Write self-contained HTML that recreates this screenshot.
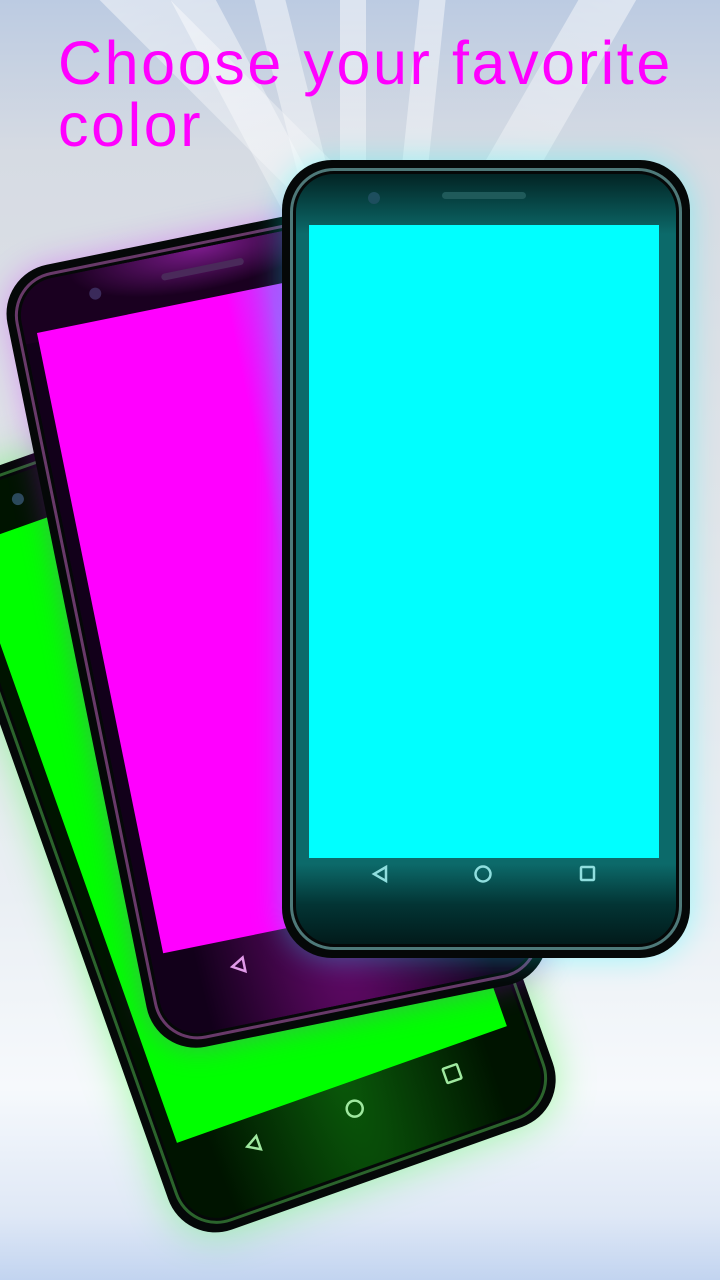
<!DOCTYPE html>
<html><head><meta charset="utf-8"><style>
*{margin:0;padding:0;box-sizing:border-box}
body{width:720px;height:1280px;overflow:hidden;position:relative;font-family:"Liberation Sans",sans-serif;
background:linear-gradient(180deg,#bccbe2 0%,#d6dbe3 12%,#e1e4e9 40%,#eaeff4 70%,#f6f9fc 85%,#dfe8f6 95%,#c2d4f0 100%);}
.ray{position:absolute;top:-100px;width:40px;height:800px;background:linear-gradient(180deg,rgba(255,255,255,.55),rgba(255,255,255,0));transform-origin:top center}
h1{position:absolute;left:58px;top:32px;font-size:61px;line-height:62px;font-weight:normal;color:#ff00ff;letter-spacing:2.6px;z-index:10}
.phone{position:absolute;width:408px;height:798px;border-radius:50px;background:#050808;padding:10px}
.phone .rim{position:absolute;inset:8px;border-radius:44px;border:3px solid rgba(160,160,160,.55)}
.phone .in{position:absolute;inset:14px;border-radius:38px;overflow:hidden}
.scr{position:absolute;left:13px;top:51px;width:350px;height:633px}
.cam{position:absolute;left:72px;top:18px;width:12px;height:12px;border-radius:50%;background:#2a4a5a}
.spk{position:absolute;left:146px;top:18px;width:84px;height:7px;border-radius:4px}
</style></head><body>
<div class="ray" style="left:120px;transform:rotate(-28deg)"></div>
<div class="ray" style="left:340px;width:26px;transform:rotate(0deg)"></div>
<div class="ray" style="left:430px;width:26px;transform:rotate(6deg)"></div>
<div class="ray" style="left:230px;width:30px;transform:rotate(-14deg)"></div>
<div class="ray" style="left:640px;width:50px;transform:rotate(30deg)"></div>
<div class="ray" style="left:10px;width:50px;transform:rotate(-45deg)"></div>
<div style="position:absolute;left:40px;top:620px;width:560px;height:560px;border-radius:50%;background:radial-gradient(circle,rgba(120,255,100,.3),rgba(120,255,100,0) 65%)"></div>

<h1>Choose your favorite<br>color</h1>

<!-- green -->
<div class="phone" style="left:40px;top:403px;transform:rotate(-19.5deg);box-shadow:0 0 40px rgba(0,255,0,.35)">
 <div class="rim" style="border-color:rgba(60,140,60,.7)"></div>
 <div class="in" style="background:radial-gradient(ellipse at 50% 85%,#0a5a0a,#001400 55%)">
  <div class="scr" style="background:#00ff00"></div>
  <div class="cam"></div>
 </div>
 <svg style="position:absolute;left:0;top:0" width="408" height="798"><g fill="none" stroke="#9fe89f" stroke-width="2.5"><path d="M104 718 L92 725 L104 732 Z"/><circle cx="206" cy="725" r="8"/><rect x="302" y="717" width="15" height="15" rx="1"/></g></svg>
</div>

<!-- magenta -->
<div class="phone" style="left:73px;top:226px;transform:rotate(-11.5deg);box-shadow:0 0 30px rgba(200,0,255,.3)">
 <div class="rim" style="border-color:rgba(170,90,170,.6)"></div>
 <div class="in" style="background:radial-gradient(ellipse at 50% 0%,#7a1a8a,#1a0020 50%) top/100% 60px no-repeat,radial-gradient(ellipse at 50% 85%,#6a0a70,#12001a 55%)">
  <div class="scr" style="background:linear-gradient(90deg,#ff00ff 0%,#ff00ff 55%,#c040ff 68%,#ff00ff 100%)"></div>
  <div class="cam" style="background:#3a2a5a"></div>
  <div class="spk" style="background:#4a2a5a"></div>
 </div>
 <svg style="position:absolute;left:0;top:0" width="408" height="798"><g fill="none" stroke="#e09ae8" stroke-width="2.5"><path d="M104 718 L92 725 L104 732 Z"/></g></svg>
</div>

<!-- cyan -->
<div class="phone" style="left:282px;top:160px;box-shadow:0 0 30px rgba(0,255,255,.35)">
 <div class="rim" style="border-color:rgba(110,170,170,.7)"></div>
 <div class="in" style="background:linear-gradient(180deg,#022424 0%,#0c6a6a 60px,#0c6a6a 690px,#033535 730px,#011414 780px)">
  <div class="cam" style="background:#1d4e5e"></div>
  <div class="spk" style="background:#1f5a5a"></div>
 </div>
 <div style="position:absolute;left:27px;top:65px;width:350px;height:633px;background:#00ffff"></div>
 <svg style="position:absolute;left:0;top:0" width="408" height="798"><g fill="none" stroke="#8fdede" stroke-width="2.5"><path d="M104 707 L92 714 L104 721 Z"/><circle cx="201" cy="714" r="7.5"/><rect x="299" y="707" width="13" height="13" rx="1"/></g></svg>
</div>
</body></html>
